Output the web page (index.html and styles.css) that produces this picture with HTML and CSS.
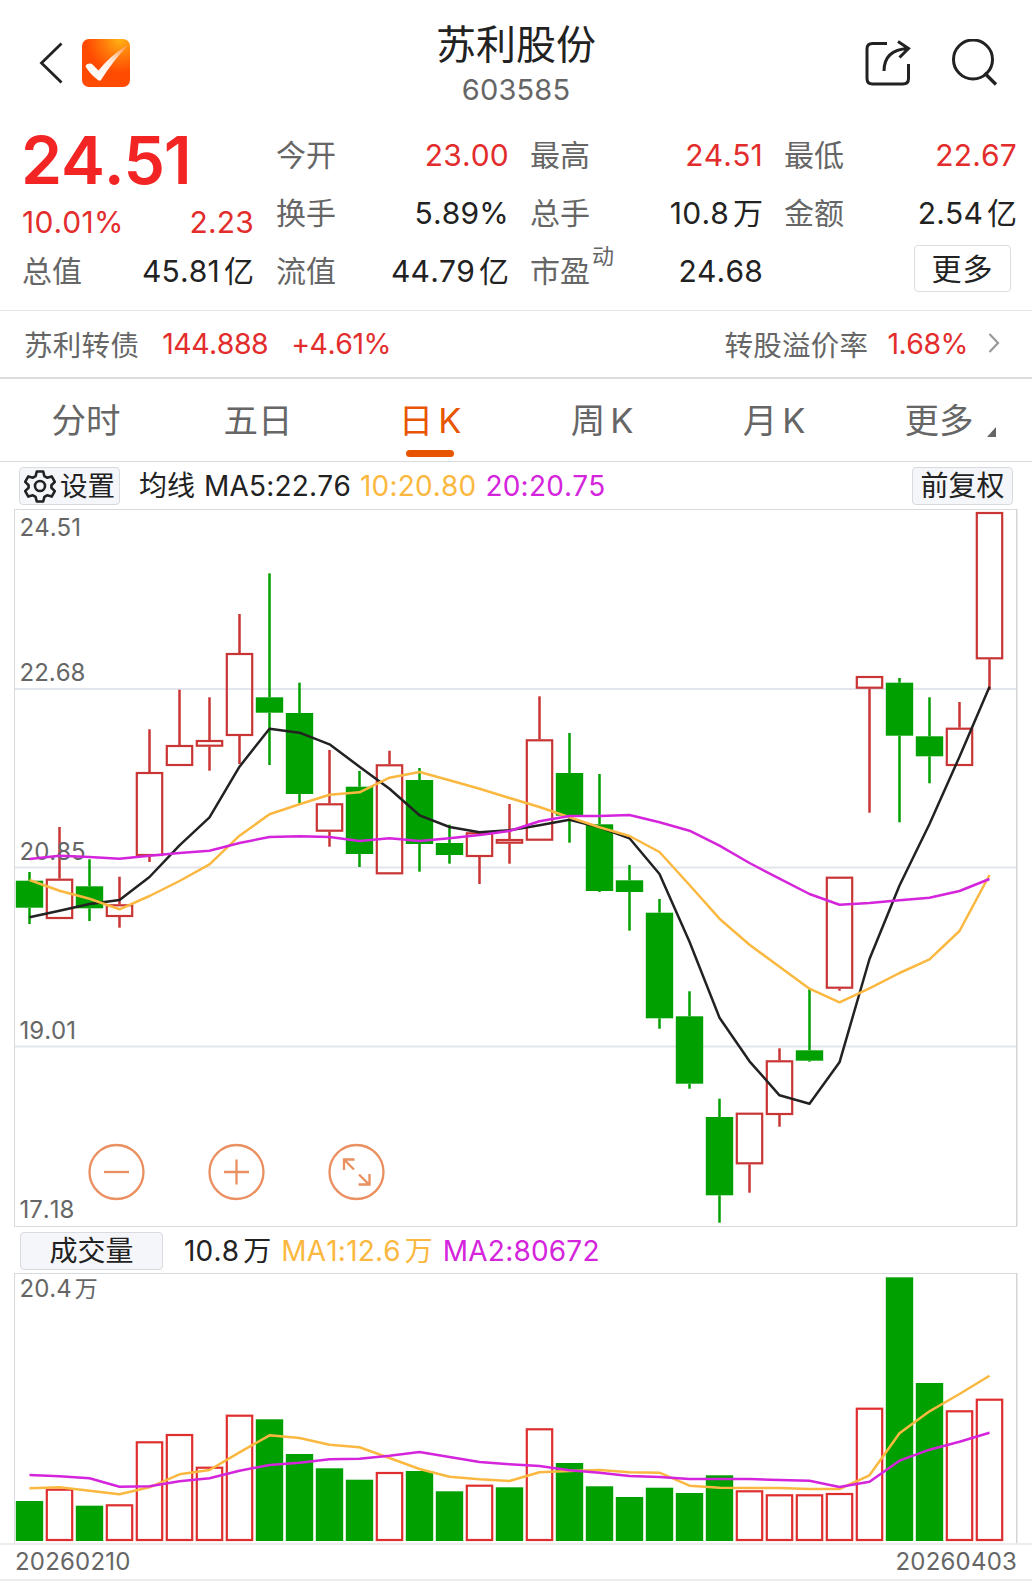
FILE: index.html
```html
<!DOCTYPE html>
<html lang="zh-CN">
<head>
<meta charset="utf-8">
<title>苏利股份 603585</title>
<link rel="stylesheet" href="styles.css">
</head>
<body>
<header class="header">
  <div class="header-left">
    <svg class="back" width="26" height="44" viewBox="0 0 26 44"><path d="M23.500 2.500 3.500 22l20 19.500" fill="none" stroke="#222" stroke-width="2.800"/></svg>
    <svg class="logo" width="48" height="48" viewBox="0 0 48 48">
      <defs>
        <radialGradient id="sun" cx="38" cy="0" r="34" gradientUnits="userSpaceOnUse"><stop offset="0" stop-color="#ffb414"/><stop offset=".5" stop-color="#ff7a0a"/><stop offset="1" stop-color="#ff4a02"/></radialGradient>
        <linearGradient id="tick" x1="14" y1="42" x2="44" y2="8" gradientUnits="userSpaceOnUse"><stop offset="0" stop-color="#fff"/><stop offset=".5" stop-color="#fff0e8"/><stop offset="1" stop-color="#ff9a50"/></linearGradient>
      </defs>
      <rect width="48" height="48" rx="7" fill="url(#sun)"/>
      <path d="M3.500 27.500Q4 24.500 8.500 24.500Q10 24.500 11 26L16.500 31.500Q28 17 44.500 6.500Q45 7 44.500 8Q31 22 19 41Q17.500 42.500 16 41Q8 35 3.500 27.500Z" fill="url(#tick)"/>
    </svg>
  </div>
  <div class="header-title">
    <h1 class="name">苏利股份</h1>
    <div class="code">603585</div>
  </div>
  <div class="header-right">
    <svg width="48" height="48" viewBox="0 0 48 48" fill="none" stroke="#222" stroke-width="3"><path d="M23 4.500H8.500Q3 4.500 3 10V39.500Q3 45 8.500 45H39Q44.500 45 44.500 39.500V25"/><path d="M20 32C20 19 27 10.500 44 9.500M34 2.500 44.500 9.500 35.500 18.500"/></svg>
    <svg width="48" height="50" viewBox="0 0 48 50" fill="none" stroke="#222" stroke-width="3"><circle cx="23" cy="20.500" r="19.500"/><path d="M34.500 34 46 45.500" stroke-width="3.300"/></svg>
  </div>
</header>

<section class="quote">
  <div class="quote-main">
    <div class="price">24.51</div>
    <div class="pair change up"><span>10.01%</span><span>2.23</span></div>
    <div class="pair"><span class="label">总值</span><span class="num">45.81<span class="unit">亿</span></span></div>
  </div>
  <div class="quote-col">
    <div class="pair"><span class="label">今开</span><span class="num up">23.00</span></div>
    <div class="pair"><span class="label">换手</span><span class="num">5.89%</span></div>
    <div class="pair"><span class="label">流值</span><span class="num">44.79<span class="unit">亿</span></span></div>
  </div>
  <div class="quote-col">
    <div class="pair"><span class="label">最高</span><span class="num up">24.51</span></div>
    <div class="pair"><span class="label">总手</span><span class="num">10.8<span class="unit">万</span></span></div>
    <div class="pair"><span class="label">市盈<sup class="sup">动</sup></span><span class="num">24.68</span></div>
  </div>
  <div class="quote-col">
    <div class="pair"><span class="label">最低</span><span class="num up">22.67</span></div>
    <div class="pair"><span class="label">金额</span><span class="num">2.54<span class="unit">亿</span></span></div>
    <div class="pair"><button class="more">更多</button></div>
  </div>
</section>

<section class="bond">
  <span class="bond-name">苏利转债</span>
  <span class="bond-price">144.888</span>
  <span class="bond-change">+4.61%</span>
  <span class="bond-name premium">转股溢价率</span>
  <span class="bond-rate">1.68%</span>
  <svg class="chevron" width="12" height="22" viewBox="0 0 12 22"><path d="M1.500 2 10 11 1.500 20" fill="none" stroke="#999" stroke-width="2.200"/></svg>
</section>

<nav class="tabs">
  <a class="tab">分时</a>
  <a class="tab">五日</a>
  <a class="tab active">日<span class="k">K</span></a>
  <a class="tab">周<span class="k">K</span></a>
  <a class="tab">月<span class="k">K</span></a>
  <a class="tab tab-more">更多<svg class="corner" width="9" height="10" viewBox="0 0 9 10"><path d="M9 0V10H0Z" fill="#666"/></svg></a>
</nav>

<div class="legend">
  <button class="chip settings"><svg width="32" height="34" viewBox="0 0 32 34" fill="none" stroke="#222" stroke-width="2.600" stroke-linejoin="round"><path d="M12.800 2.500h6.400l1.200 4.600 2.700 1.600 4.600-1.300 3.100 5.500-3.400 3.300v2.600l3.400 3.300-3.100 5.500-4.600-1.300-2.700 1.600-1.200 4.600h-6.400l-1.200-4.600-2.700-1.600-4.600 1.300-3.100-5.500 3.400-3.300v-2.600l-3.400-3.300 3.100-5.500 4.600 1.300 2.700-1.600z"/><circle cx="16" cy="17" r="5"/></svg>设置</button>
  <span class="ma-title">均线</span>
  <span class="ma ma5">MA5:22.76</span>
  <span class="ma ma10">10:20.80</span>
  <span class="ma ma20">20:20.75</span>
  <button class="chip adjust">前复权</button>
</div>

<div class="chart">
  <svg id="price-chart" width="1032" height="718" viewBox="0 509 1032 718"></svg>
</div>

<div class="legend legend-volume">
  <button class="chip volume">成交量</button>
  <span class="vol vol-now">10.8<span class="unit">万</span></span>
  <span class="vol vol-ma1">MA1:12.6<span class="unit">万</span></span>
  <span class="vol vol-ma2">MA2:80672</span>
</div>

<div class="chart">
  <svg id="volume-chart" width="1032" height="270" viewBox="0 1273 1032 270"></svg>
</div>
<footer class="dates"><span>20260210</span><span class="date-end">20260403</span></footer>
<script src="chart.js"></script>
</body>
</html>
```

FILE: styles.css
```css
* { box-sizing: border-box; }
body {
  margin: 0;
  width: 1032px;
  height: 1586px;
  overflow: hidden;
  background: #fff;
  color: #222;
  font-family: Inter, "Noto Sans CJK SC", sans-serif;
  font-weight: 400;
  font-kerning: none;
}
svg { display: block; flex: none; }
button { font: inherit; color: inherit; padding: 0; }
.up { color: #e32d2d; }

.header {
  display: grid;
  grid-template-columns: 1fr auto 1fr;
  height: 124px;
}
.header-left, .header-right { display: flex; align-items: flex-start; }
.header-left { padding: 39px 0 0 38px; gap: 18px; }
.back { margin-top: 2px; }
.header-right { justify-content: flex-end; padding: 39px 34px 0 0; gap: 38px; }
.name { margin: 0; padding-top: 20px; font-size: 40px; font-weight: 400; line-height: 50px; }
.code { font-size: 29px; line-height: 40px; text-align: center; color: #666; letter-spacing: .2px; }

.quote {
  display: grid;
  grid-template-columns: repeat(4, 231px);
  column-gap: 23px;
  height: 187px;
  padding-left: 23px;
  border-bottom: 1px solid #e6e6e6;
}
.quote-main { padding-top: 3px; }
.price { height: 68px; margin-left: -2px; font-size: 66px; font-weight: 600; line-height: 66px; color: #f22424; letter-spacing: -1.200px; }
.pair { display: flex; justify-content: space-between; height: 58px; line-height: 58px; font-size: 30px; letter-spacing: .2px; }
.quote-col { padding-top: 2px; }
.quote-col .num { margin-right: -1px; }
.quote-main .change { height: 47px; line-height: 54px; margin-left: -1px; }
.label { margin-left: -1px; color: #666; letter-spacing: 0; }
.unit { margin-left: 4px; letter-spacing: 0; }
.sup { font-size: 22px; line-height: 0; vertical-align: 18px; margin-left: 2px; }
.more { width: 97px; height: 47px; margin: 3px 5px 0 auto; border: 1px solid #ddd; border-radius: 4px; background: #fff; line-height: 42px; letter-spacing: 1px; }

.bond {
  display: flex;
  align-items: center;
  height: 68px;
  padding: 0 32px 2px 24px;
  border-bottom: 2px solid #dcdcdc;
  font-size: 28.500px;
  color: #e32d2d;
  letter-spacing: -.5px;
}
.bond-name { color: #666; letter-spacing: .3px; }
.bond-price { margin-left: 23px; }
.bond-change { margin-left: 23px; }
.premium { margin-left: auto; }
.bond-rate { margin-left: 19px; }
.chevron { margin-left: 20px; }

.tabs { display: grid; grid-template-columns: repeat(6, 172px); height: 83px; border-bottom: 1px solid #d8dadc; }
.tab { display: flex; justify-content: center; position: relative; font-size: 34.500px; line-height: 84px; color: #666; }
.k { margin-left: 5px; }
.active { color: #e85502; }
.active::after { content: ""; position: absolute; left: 62px; bottom: 6px; width: 48px; height: 7px; border-radius: 3.500px; background: #e85502; }
.tab-more { padding-left: 8px; }
.corner { margin: 48px 0 0 13px; }

.legend { display: flex; align-items: center; height: 47px; padding: 0 19px; font-size: 28px; line-height: 38px; letter-spacing: .2px; }
.legend-volume { height: 46px; padding-top: 1px; }
.chip { display: flex; align-items: center; justify-content: center; height: 38px; border: 1px solid #d8dadd; border-radius: 4px; background: #f5f6f9; line-height: 34px; letter-spacing: 0; }
.settings { width: 101px; gap: 4px; font-size: 27.500px; }
.ma-title { margin-left: 19px; letter-spacing: 0; }
.ma { margin-left: 9px; }
.ma10, .vol-ma1 { color: #fbb840; }
.ma20, .vol-ma2 { color: #d424dc; }
.adjust { width: 101px; margin-left: auto; }
.volume { width: 143px; margin-left: 1px; }
.vol-now { margin-left: 21px; }
.vol-ma1, .vol-ma2 { margin-left: 10px; }

.up-candle { fill: none; stroke: #c93434; stroke-width: 2.200; }
.up-volume { fill: none; stroke: #de2e2e; stroke-width: 2.200; }
.down { fill: #00a000; stroke: none; }
.wick-up { stroke: #c93434; stroke-width: 2.500; }
.wick-down { stroke: #00a000; stroke-width: 2.500; }
.frame { stroke: #d8dadd; stroke-width: 1; }
.frame-right { stroke: #d3d5d9; stroke-width: 1.500; }
.grid { stroke: #e2e6ec; stroke-width: 2; }
.line { fill: none; stroke-width: 2.500; stroke-linejoin: round; }
.line-black { stroke: #222; }
.line-orange { stroke: #fbb840; }
.line-purple { stroke: #d424dc; }
.axis { fill: #666; font-size: 24px; }
.axis-unit { font-size: 23px; }
.zoom { fill: none; stroke: #ea8f60; stroke-width: 2.300; }

.dates { display: flex; justify-content: space-between; height: 38px; padding: 0 15px; border-top: 2px solid #ececec; border-bottom: 2px solid #ececec; font-size: 24px; line-height: 33px; letter-spacing: .2px; color: #666; }
```

FILE: chart.js
```js
const STEP = 30, FIRST = 29.5, BODY = 27.4;
const cx = i => FIRST + i * STEP;

// direction, high, body top, body bottom, low
const candles = [
  ['d',872,880.7,907.7,924],['u',827,878.7,919,919],['d',859.3,886.3,908.3,921],['u',876.7,904.3,917,927.7],
  ['u',729.3,772,856,862],['u',689.7,745,766,766],['u',697.3,740,746.7,770.7],['u',614,653,736,764],
  ['d',573.3,697.3,712.7,765],['d',682.7,713,794,803.7],['u',750,803.3,831.7,846.7],['d',771,786.7,854,867],
  ['u',750.7,764.3,874.3,874.3],['d',768,780,844,871.7],['d',824.7,843,855,863.7],['u',832.3,832.3,857,884],
  ['u',804,839,843.7,863.7],['u',696.3,739.3,840.7,840.7],['d',733,773,815.7,842.7],['d',774,824.3,891,892],
  ['d',865,880.3,892,930.7],['d',899,912.7,1018.3,1028.7],['d',991.3,1016.3,1083.7,1088.7],['d',1098.7,1117,1195.3,1222.7],
  ['u',1112.7,1112.7,1164.3,1192.7],['u',1048.3,1060.3,1115,1126.7],['d',988.3,1050.3,1060.7,1061.7],['u',876.7,876.7,988.7,990.7],
  ['u',676,676,688.7,812.7],['d',678,682.7,735.7,822.3],['d',697.3,736.3,756.3,783.3],['u',702,727.7,766,766],
  ['u',512,512,659.3,690]
];
const ma5 = [917.3,910.7,904,900,877,845.3,817.3,766.7,728.7,732.7,744.3,766.7,788.7,815.3,827,832.3,830.3,825.3,819.7,827.3,838.3,874,941.7,1017.7,1061.3,1095.3,1103.7,1062.3,959,885.5,824,756.7,686.7];
const ma10 = [880,890.7,898.7,909.3,896,881,864.3,835.7,814.3,804.3,794.7,792.3,777.7,772,780.3,788.7,798,807,817.3,827.3,836,852,885,918.7,944.7,966.7,988.7,1002.3,988.3,973,959.3,931,875];
const ma20 = [859,855.7,857,858.7,855.7,853,850.7,843,837,836.3,837,841,838.3,841,838.3,835,831,821.3,816,816,815,822.3,830.7,845.7,863,878.7,894,904.7,903,900.3,897.7,891,879];

const volumeTop = [1501,1488.7,1505.7,1504.3,1441.3,1434,1466.7,1414.7,1419.3,1454,1468.3,1479.7,1472,1471,1491.3,1484.7,1487.3,1428.3,1463,1486.3,1497,1487.7,1493,1475.3,1490.3,1494.3,1494.3,1493,1407.7,1277.3,1383,1410.3,1398.7];
const volumeUp = [1,3,4,5,6,7,12,15,17,24,25,26,27,28,31,32];
const volumeMa1 = [1488.3,1487.3,1490.7,1494.3,1487.3,1474.3,1470,1452.3,1435.3,1438,1444.7,1447.3,1458,1469,1476.7,1479.3,1481,1472.3,1471,1470,1472.3,1472.7,1485.7,1487.7,1488,1488,1489,1489,1475.3,1433.3,1411.3,1394,1375.7];
const volumeMa2 = [1475,1476.3,1478.3,1486.7,1486.3,1481.3,1478.3,1470.7,1465,1462.7,1459.3,1458.7,1455.7,1452,1457,1462,1464.3,1466,1470.3,1472.7,1476,1477,1479,1479,1479,1480,1480.7,1487,1481.7,1460.7,1449.7,1441.7,1432.7];

const seg = (cls, x1, y1, x2, y2) => `<line class="${cls}" x1="${x1}" y1="${y1}" x2="${x2}" y2="${y2}"/>`;
const poly = (cls, ys) => `<polyline class="line ${cls}" points="${ys.map((y, i) => cx(i) + ',' + y).join(' ')}"/>`;
const bar = (i, top, bottom, up, cls) => up
  ? `<rect class="${cls}" x="${cx(i) - BODY / 2 + 1}" y="${top + 1}" width="${BODY - 2}" height="${bottom - top - 2}"/>`
  : `<rect class="down" x="${cx(i) - BODY / 2}" y="${top}" width="${BODY}" height="${bottom - top}"/>`;
const label = (y, text) => `<text class="axis" x="19.500" y="${y}">${text}</text>`;

let p = seg('frame', 14, 509.5, 1017, 509.5) + seg('frame', 14.5, 509, 14.5, 1226) +
  seg('frame-right', 1016.75, 509, 1016.75, 1226) + seg('frame', 14, 1226.5, 1017, 1226.5) +
  [689, 867.5, 1046.5].map(y => seg('grid', 15, y, 1016, y)).join('');
candles.forEach(([dir, high, top, bottom, low], i) => {
  const up = dir === 'u', wick = up ? 'wick-up' : 'wick-down';
  if (high < top) p += seg(wick, cx(i), high, cx(i), top);
  if (low > bottom) p += seg(wick, cx(i), bottom, cx(i), low);
  p += bar(i, top, bottom, up, 'up-candle');
});
p += label(535.5, '24.51') + label(681, '22.68') + label(860, '20.85') + label(1038.5, '19.01') + label(1217.5, '17.18');
p += poly('line-black', ma5) + poly('line-orange', ma10) + poly('line-purple', ma20);
p += `<g class="zoom"><circle cx="116.500" cy="1172" r="27"/><path d="M104 1172h25"/>
  <circle cx="236.500" cy="1172" r="27"/><path d="M224 1172h25M236.500 1159.500v25"/>
  <circle cx="356.500" cy="1172" r="27"/><path d="M354 1169.500 344 1159.500M344 1170V1159.500H354.500M359 1174.500 369 1184.500M358.500 1184.500H369.500V1174"/></g>`;
document.getElementById('price-chart').innerHTML = p;

let v = seg('frame', 14, 1273.5, 1017, 1273.5) + seg('frame', 14.5, 1273, 14.5, 1544) + seg('frame-right', 1016.75, 1273, 1016.75, 1544);
volumeTop.forEach((top, i) => { v += bar(i, top, 1541, volumeUp.includes(i), 'up-volume'); });
v += poly('line-orange', volumeMa1) + poly('line-purple', volumeMa2) + label(1297, '20.4<tspan class="axis-unit" dx="3">万</tspan>');
document.getElementById('volume-chart').innerHTML = v;
```
